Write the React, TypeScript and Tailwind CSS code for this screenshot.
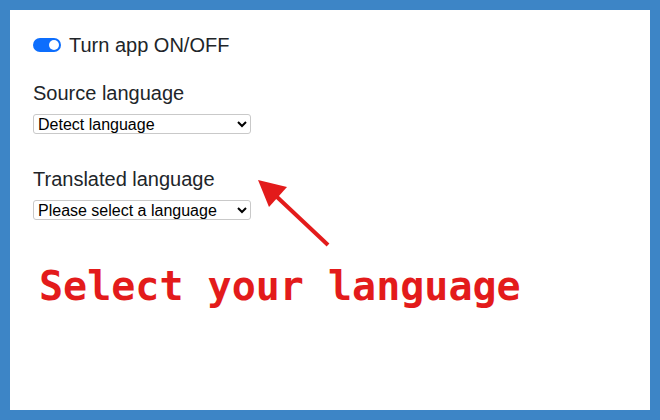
import { useState } from 'react';

const languages = ['English', 'French', 'German', 'Spanish', 'Japanese', 'Chinese'];

const Toggle = ({ on, onClick }: { on: boolean; onClick: () => void }) => (
  <button
    type="button"
    onClick={onClick}
    className={`flex h-[14px] w-[28px] items-center rounded-full px-[2px] ${
      on ? 'justify-end bg-[#0d6efd]' : 'justify-start bg-[#c4c8cc]'
    }`}
  >
    <span className="h-[10px] w-[10px] rounded-full bg-white" />
  </button>
);

const LangSelect = ({ first }: { first: string }) => (
  <select className="mt-[6px] block h-[20px] w-[218px] rounded-[3px] border border-[#c9c9c9] bg-white text-[16px] leading-[18px] text-black">
    <option>{first}</option>
    {languages.map((l) => (
      <option key={l}>{l}</option>
    ))}
  </select>
);

const App = () => {
  const [on, setOn] = useState(true);

  return (
    <div className="h-[420px] w-[660px] bg-[#3d85c6] p-[10px]">
      <div
        className="relative h-full w-full bg-white pl-[23px] pt-[20px] text-[#212529]"
        style={{ fontFamily: '"Liberation Sans", Arial, sans-serif' }}
      >
        <div className="flex h-[30px] items-center gap-[8px] text-[20px] leading-[30px]">
          <Toggle on={on} onClick={() => setOn(!on)} />
          <span>Turn app ON/OFF</span>
        </div>

        <div className="mt-[18px] text-[20px] leading-[30px]">Source language</div>
        <LangSelect first="Detect language" />

        <div className="mt-[30px] text-[20px] leading-[30px]">Translated language</div>
        <LangSelect first="Please select a language" />

        <div
          className="ml-[6px] mt-[46px] text-[40px] font-bold leading-[40px] text-[#e31b1b]"
          style={{ fontFamily: '"DejaVu Sans Mono", monospace' }}
        >
          Select your language
        </div>

        <svg
          className="pointer-events-none absolute left-0 top-0"
          width="640"
          height="400"
          viewBox="10 10 640 400"
        >
          <line x1="328" y1="245" x2="276" y2="196" stroke="#e31b1b" strokeWidth="4" />
          <polygon points="258,180 287,187 269,207" fill="#e31b1b" />
        </svg>
      </div>
    </div>
  );
};

export default App;
